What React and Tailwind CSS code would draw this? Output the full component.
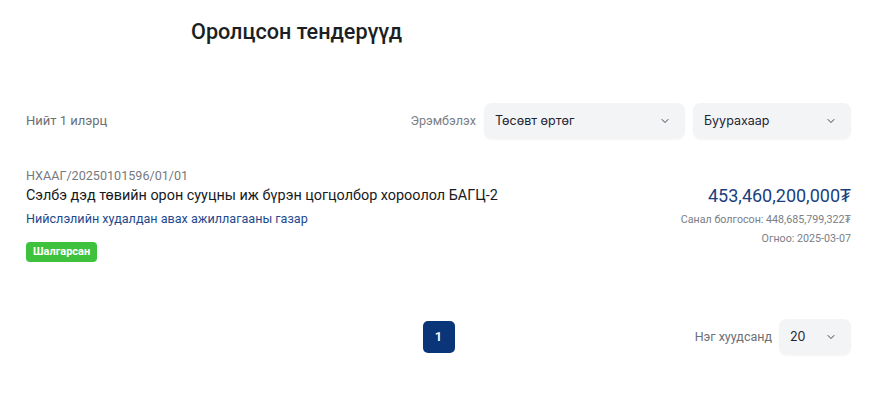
import { ChevronDown } from 'lucide-react'

const Select = ({ value, className = '' }) => (
  <div
    className={`flex h-9 items-center justify-between rounded-lg bg-[#f3f4f6] pl-[11px] pr-[14px] text-[12.5px] text-[#1f2433] shadow-[0_1px_2px_rgba(0,0,0,0.04)] ${className}`}
    style={{ fontFamily: 'Inter, sans-serif' }}
  >
    <span>{value}</span>
    <ChevronDown className="h-3 w-3 text-[#374151]" strokeWidth={2} />
  </div>
)

export default function App() {
  return (
    <div
      className="min-h-[400px] w-full bg-white pl-[26px] pr-[37px]"
      style={{ fontFamily: 'Roboto, "Liberation Sans", sans-serif' }}
    >
      {/* Heading */}
      <h1 className="ml-[165px] pt-[18px] text-[21.6px] leading-7 font-medium text-[#1b1f23]">
        Оролцсон тендерүүд
      </h1>

      {/* Filter bar */}
      <div className="mt-[57px] flex h-9 items-center justify-between">
        <span className="text-[13px] text-[#6b6f76]">Нийт 1 илэрц</span>
        <div className="flex items-center gap-2">
          <span className="text-[12.6px] text-[#7a7e85]">Эрэмбэлэх</span>
          <Select value="Төсөвт өртөг" className="w-[201px]" />
          <Select value="Буурахаар" className="w-[158px]" />
        </div>
      </div>

      {/* Tender item */}
      <div className="mt-[27px] flex justify-between">
        <div className="flex flex-col items-start">
          <div className="text-[12.6px] leading-5 text-[#76797e]">НХААГ/20250101596/01/01</div>
          <div className="text-[14.4px] leading-5 text-[#16191d]">
            Сэлбэ дэд төвийн орон сууцны иж бүрэн цогцолбор хороолол БАГЦ-2
          </div>
          <a className="mt-[3px] text-[12.6px] leading-5 text-[#1d4a8e]">
            Нийслэлийн худалдан авах ажиллагааны газар
          </a>
          <span className="mt-[13px] flex h-5 items-center rounded-[4px] bg-[#3ec23e] px-[7px] text-[11px] font-bold text-white">
            Шалгарсан
          </span>
        </div>
        <div className="flex flex-col items-end pt-[18px]">
          <div className="text-[18px] leading-6 text-[#1a3f80]">453,460,200,000₮</div>
          <div className="mt-1 text-[10.7px] leading-4 text-[#7a7e85]">
            Санал болгосон: 448,685,799,322₮
          </div>
          <div className="mt-[3px] text-[10.7px] leading-4 text-[#7a7e85]">Огноо: 2025-03-07</div>
        </div>
      </div>

      {/* Pagination */}
      <div className="mt-[57px] grid h-9 grid-cols-3 items-center">
        <div />
        <div className="flex justify-center">
          <button className="flex h-8 w-8 items-center justify-center rounded-[5px] bg-[#0b3579] text-[13px] font-semibold text-white">
            1
          </button>
        </div>
        <div className="flex items-center justify-end gap-[7px]">
          <span className="text-[12.5px] text-[#6b6f76]">Нэг хуудсанд</span>
          <Select value="20" className="w-[72px]" />
        </div>
      </div>
    </div>
  )
}
